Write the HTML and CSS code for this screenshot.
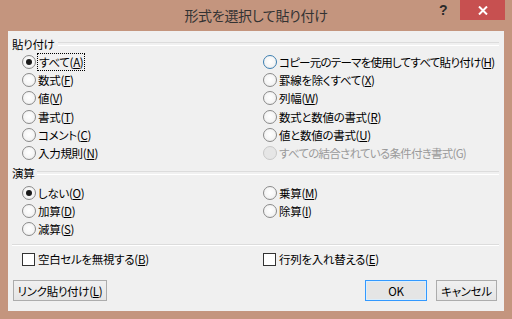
FILE: index.html
```html
<!DOCTYPE html>
<html lang="ja">
<head>
  <meta charset="UTF-8" />
  <title>形式を選択して貼り付け</title>
  <link rel="stylesheet" href="styles.css">
</head>
<body>
  <div class="window">
    <div class="titlebar">
      <span class="title">形式を選択して貼り付け</span>
      <span class="help">?</span>
      <span class="close">
        <svg width="10" height="9" viewBox="0 0 10 9"><path d="M1 0.5 L9 8.5 M9 0.5 L1 8.5" stroke="#fff" stroke-width="2"/></svg>
      </span>
    </div>

    <div class="client">
      <div class="group-head"><span>貼り付け</span></div>
      <div class="options paste">
        <label class="opt"><i class="radio on"></i><span class="focus">すべて(<u>A</u>)</span></label>
        <label class="opt"><i class="radio"></i>数式(<u>F</u>)</label>
        <label class="opt"><i class="radio"></i>値(<u>V</u>)</label>
        <label class="opt"><i class="radio"></i>書式(<u>T</u>)</label>
        <label class="opt"><i class="radio"></i>コメント(<u>C</u>)</label>
        <label class="opt"><i class="radio"></i>入力規則(<u>N</u>)</label>
        <label class="opt tight"><i class="radio hover"></i>コピー元のテーマを使用してすべて貼り付け(<u>H</u>)</label>
        <label class="opt"><i class="radio"></i>罫線を除くすべて(<u>X</u>)</label>
        <label class="opt"><i class="radio"></i>列幅(<u>W</u>)</label>
        <label class="opt"><i class="radio"></i>数式と数値の書式(<u>R</u>)</label>
        <label class="opt"><i class="radio"></i>値と数値の書式(<u>U</u>)</label>
        <label class="opt tight disabled"><i class="radio"></i>すべての結合されている条件付き書式(G)</label>
      </div>

      <div class="group-head"><span>演算</span></div>
      <div class="options calc">
        <label class="opt"><i class="radio on"></i>しない(<u>O</u>)</label>
        <label class="opt"><i class="radio"></i>加算(<u>D</u>)</label>
        <label class="opt"><i class="radio"></i>減算(<u>S</u>)</label>
        <label class="opt"><i class="radio"></i>乗算(<u>M</u>)</label>
        <label class="opt"><i class="radio"></i>除算(<u>I</u>)</label>
      </div>

      <div class="sep"></div>

      <div class="options checks">
        <label class="opt"><i class="check"></i>空白セルを無視する(<u>B</u>)</label>
        <label class="opt"><i class="check"></i>行列を入れ替える(<u>E</u>)</label>
      </div>

      <div class="buttons">
        <button class="link-btn">リンク貼り付け(<u>L</u>)</button>
        <span class="spacer"></span>
        <button class="ok">OK</button>
        <button class="cancel">キャンセル</button>
      </div>
    </div>
  </div>
</body>
</html>
```

FILE: styles.css
```css
* {
  box-sizing: border-box;
}

html, body {
  margin: 0;
  padding: 0;
  width: 512px;
  height: 319px;
  overflow: hidden;
  background: #c4957e;
}

.window {
  width: 512px;
  height: 319px;
  background: #c4957e;
  padding: 0 8px 8px 8px;
  display: flex;
  flex-direction: column;
  font-family: "Noto Sans CJK JP", "Noto Sans", sans-serif;
  font-feature-settings: "palt";
  font-size: 11.5px;
  letter-spacing: -0.3px;
  color: #000;
}

.titlebar {
  height: 31px;
  position: relative;
  display: flex;
  justify-content: center;
  align-items: center;
}

.title {
  font-size: 14px;
  color: #333;
  padding-bottom: 1px;
  letter-spacing: -0.3px;
}

.help {
  position: absolute;
  left: 431px;
  top: 2px;
  font-family: "Liberation Sans", sans-serif;
  font-weight: bold;
  font-size: 14px;
  color: #2a2a2a;
}

.close {
  position: absolute;
  left: 452px;
  top: 0;
  width: 45px;
  height: 20px;
  background: #c75050;
  display: flex;
  justify-content: center;
  align-items: center;
}

.client {
  flex: 1;
  background: #f0f0f0;
  padding: 6px 5px 0 4px;
  display: flex;
  flex-direction: column;
}

.group-head {
  display: flex;
  align-items: center;
  height: 14px;
  line-height: 14px;
}

.group-head::after {
  content: "";
  flex: 1;
  height: 2px;
  margin-left: 3px;
  border-top: 1px solid #dcdcdc;
  border-bottom: 1px solid #fff;
}

.options {
  display: grid;
  grid-auto-flow: column;
  grid-template-columns: 241px 1fr;
  padding-left: 10px;
}

.paste {
  grid-template-rows: repeat(6, 18.2px);
  margin-top: 2px;
  margin-bottom: 4px;
}

.calc {
  grid-template-rows: repeat(3, 18px);
  margin-top: 4px;
}

.opt {
  display: flex;
  align-items: center;
  white-space: nowrap;
  line-height: 16px;
}

.tight {
  letter-spacing: -0.75px;
}

.opt u {
  text-decoration-thickness: 1px;
  text-underline-offset: 1px;
}

.radio {
  width: 14px;
  height: 14px;
  border-radius: 50%;
  border: 1px solid #8a8a8a;
  background: radial-gradient(circle at 50% 45%, #ffffff 0%, #f4f4f4 60%, #e2e2e2 100%);
  margin-right: 2px;
  flex: none;
  display: flex;
  justify-content: center;
  align-items: center;
}

.radio.on::after {
  content: "";
  width: 6px;
  height: 6px;
  border-radius: 50%;
  background: #1a1a1a;
}

.radio.hover {
  border-color: #3c7fb1;
}

.disabled {
  color: #9a9a9a;
}

.disabled .radio {
  border-color: #c8c8c8;
  background: #e6e6e6;
}

.focus {
  outline: 1px dotted #000;
  outline-offset: 0;
  padding: 0 1px;
}

.sep {
  height: 2px;
  margin: 6px 0 0 0;
  border-top: 1px solid #dcdcdc;
  border-bottom: 1px solid #fff;
}

.checks {
  grid-template-rows: 18px;
  margin-top: 4px;
}

.check {
  width: 13px;
  height: 13px;
  border: 1px solid #333;
  background: #fff;
  margin-right: 3px;
  flex: none;
}

.buttons {
  display: flex;
  gap: 9px;
  margin-top: 12px;
  padding-left: 1px;
  padding-right: 2px;
}

.spacer {
  flex: 1;
}

button {
  font: inherit;
  font-feature-settings: "palt";
  letter-spacing: -0.3px;
  height: 21px;
  padding: 0 2px;
  white-space: nowrap;
  border: 1px solid #acacac;
  background: linear-gradient(#f0f0f0, #e5e5e5);
  color: #000;
  line-height: 18px;
}

button u {
  text-decoration-thickness: 1px;
}

.link-btn {
  width: 94px;
}

.ok {
  width: 62px;
  border-color: #3399ff;
  background: #e5e5e5;
  box-shadow: inset 0 0 0 1px #dbeefc;
}

.cancel {
  width: 61px;
}
```
